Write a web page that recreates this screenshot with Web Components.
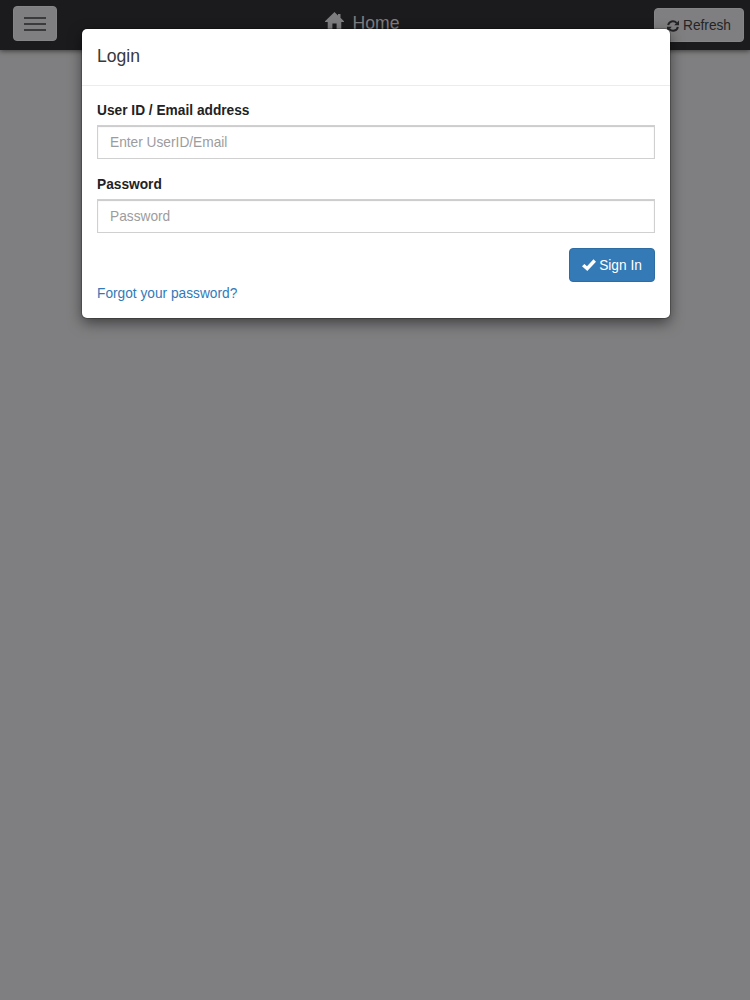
<!DOCTYPE html>
<html lang="en">
<head>
<meta charset="utf-8">
<title>Login</title>
<style>
body{margin:0;background:#7f7f81;font:13.72px/19.5px "Liberation Sans",Arial,sans-serif;color:#333}
</style>
</head>
<body>
<app-shell>
  <top-bar slot="bar"></top-bar>
  <login-dialog>
    <span slot="title">Login</span>
    <form-field label="User ID / Email address" hint="Enter UserID/Email"></form-field>
    <form-field label="Password" hint="Password" kind="password"></form-field>
    <sign-button slot="action">Sign In</sign-button>
    <text-link slot="footer">Forgot your password?</text-link>
  </login-dialog>
</app-shell>
<script>
function define(name, html) {
  const t = document.createElement('template');
  t.innerHTML = html;
  customElements.define(name, class extends HTMLElement {
    constructor() {
      super();
      this.attachShadow({ mode: 'open' }).append(t.content.cloneNode(true));
    }
    connectedCallback() {
      const label = this.shadowRoot.querySelector('label');
      if (!label) return;
      const input = this.shadowRoot.querySelector('input');
      label.textContent = this.getAttribute('label');
      input.placeholder = this.getAttribute('hint');
      input.type = this.getAttribute('kind') || 'text';
    }
  });
}
define('app-shell', `<style>
:host{display:block;position:relative;height:1000px;overflow:hidden}
.overlay{position:absolute;inset:29px 0 auto;display:flex;justify-content:center;padding-left:2px}
</style><slot name="bar"></slot><div class="overlay"><slot></slot></div>`);

define('top-bar', `<style>
:host{display:grid;grid-template-columns:1fr auto 1fr;align-items:start;height:50px;box-sizing:border-box;padding:6px 6px 0 13px;background:#1b1b1d;box-shadow:0 1px 5px rgba(0,0,0,.55)}
button{font:inherit;border:1px solid #858587;background:#7f7f81;border-radius:4px;box-sizing:border-box;height:34px;margin:0}
.menu{width:43.5px;height:34.5px;padding:1px 0 0;display:grid;place-items:center;color:#3a3a3c}
.title{display:flex;gap:9px;align-items:center;font-size:17.58px;height:35px;color:#7e7e80;margin:0 19px 0 -14px}
.refresh{justify-self:end;margin-top:2px;width:90px;padding:2px 0 0;display:flex;align-items:center;justify-content:center;gap:4px;color:#242426}
svg{display:block}
</style>
<button class="menu" aria-label="Menu"><svg width="22" height="16" viewBox="0 0 22 16"><path d="M0 2h22M0 8h22M0 14h22" stroke="currentColor" stroke-width="2"/></svg></button>
<div class="title"><svg width="19" height="18" viewBox="0 0 19 18" style="margin-top:-5px"><path fill="currentColor" d="M9.5 0 13 3.4V2h2.5v3.8L19 9.3V10h-2.7v7.5h-4.7v-6H7.4v6H2.7V10H0v-.7z"/></svg><span>Home</span></div>
<button class="refresh"><svg width="12" height="12" viewBox="0 0 12 12"><path fill="none" stroke="currentColor" stroke-width="2" d="M1.2 5.2C1.8 1.2 6.8-.1 9.6 2.9M10.8 6.8C10.2 10.8 5.2 12.1 2.4 9.1"/><path fill="currentColor" d="M12 .4v4.8H7.2zM0 11.6V6.8h4.8z"/></svg><span>Refresh</span></button>`);

define('login-dialog', `<style>
:host{display:block;box-sizing:border-box;width:588px;height:289px;background:#fff;border-radius:5px;box-shadow:0 0 0 1px rgba(0,0,0,.2),0 5px 14px rgba(0,0,0,.5)}
header{box-sizing:border-box;height:57px;padding:15px 15px 0;border-bottom:1px solid #ececee;font-size:17.58px;line-height:25px;color:#39393b}
main{padding:15px 15px 0}
.actions{display:flex;justify-content:flex-end;margin-top:-1px}
footer{margin-top:2px}
</style><header><slot name="title"></slot></header>
<main><slot></slot><div class="actions"><slot name="action"></slot></div><footer><slot name="footer"></slot></footer></main>`);

define('form-field', `<style>
:host{display:block;height:74px}
label{display:block;font-weight:bold;height:24px;color:#222224}
input{display:block;box-sizing:border-box;width:100%;height:34px;margin:0;padding:0 12px;border:1px solid #d0d0d0;border-radius:0;background:#fff;box-shadow:inset 0 1px 1px rgba(0,0,0,.22);font:inherit;outline:0}
input::placeholder{color:#9c9c9e;opacity:1}
</style><label for="f"></label><input id="f">`);

define('sign-button', `<style>
:host{display:block}
button{box-sizing:border-box;width:86px;height:34px;margin:0;padding:1px 0 0;border:1px solid #2e6da4;border-radius:4px;background:#337ab7;color:#fff;font:inherit;display:flex;align-items:center;justify-content:center;gap:3px}
svg{margin-top:-1px}
</style><button><svg width="14" height="12" viewBox="0 0 14 12"><path fill="currentColor" d="M0 7.3 2.4 4.9 5 7.3 11.5.3 14 2.7 5.3 12z"/></svg><span><slot></slot></span></button>`);

define('text-link', `<style>
:host{display:block}
a{color:#337ab7;text-decoration:none}
</style><a href="#"><slot></slot></a>`);
</script>
</body>
</html>
